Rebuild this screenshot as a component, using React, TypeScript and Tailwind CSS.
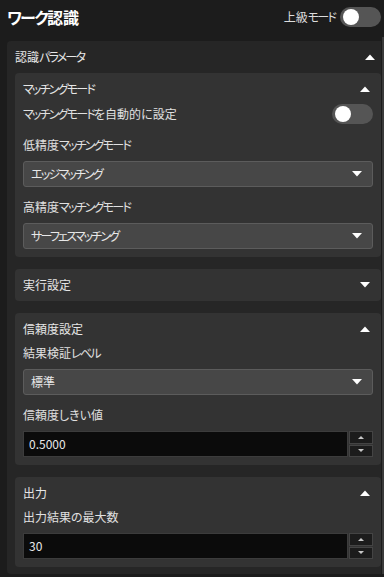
import { useState } from 'react';

const FONT = "font-['Noto_Sans_CJK_JP','Noto_Sans',sans-serif] [font-feature-settings:'palt']";

// katakana runs are set tighter, closer to the narrow UI font in the screenshot
function Jp({ text, loose = false }: { text: string; loose?: boolean }) {
  const parts = text.split(/([\u30A0-\u30FF]+)/);
  return (
    <>
      {parts.map((p, i) =>
        /[\u30A0-\u30FF]/.test(p) ? (
          <span key={i} className={loose ? 'tracking-[-0.1em]' : 'tracking-[-0.15em]'}>
            {p}
          </span>
        ) : (
          <span key={i}>{p}</span>
        ),
      )}
    </>
  );
}

function Caret({ up = false, className = '' }: { up?: boolean; className?: string }) {
  return (
    <svg width="10" height="6" viewBox="0 0 10 6" className={className}>
      <path d={up ? 'M0 6 L5 0.5 L10 6 Z' : 'M0 0 L10 0 L5 5.5 Z'} fill="#ffffff" />
    </svg>
  );
}

function Toggle({ on, onChange }: { on: boolean; onChange: (v: boolean) => void }) {
  return (
    <button
      type="button"
      onClick={() => onChange(!on)}
      className={`flex h-[20px] w-[41px] items-center rounded-full px-[3px] ${on ? 'bg-[#2f7fd8]' : 'bg-[#555555]'}`}
    >
      <span className={`h-[16px] w-[16px] rounded-full bg-white ${on ? 'ml-auto' : ''}`} />
    </button>
  );
}

function Select({ value }: { value: string }) {
  return (
    <div className="mt-[7px] flex h-[26px] items-center justify-between rounded-[3px] border border-[#5c5c5c] bg-[#474747] pl-[7px] pr-[10px] text-[12px] text-[#e8e8e8]">
      <span>
        <Jp text={value} />
      </span>
      <Caret />
    </div>
  );
}

function NumberField({ value }: { value: string }) {
  return (
    <div className="mt-[7px] flex h-[26px]">
      <div className="flex flex-1 items-center border border-[#3c3c3c] bg-[#0b0b0b] pl-[5px] text-[12px] text-[#e8e8e8]">
        {value}
      </div>
      <div className="ml-px flex w-[24px] flex-col gap-px">
        <div className="flex flex-1 items-center justify-center border border-[#444444] bg-[#1c1c1c]">
          <svg width="6" height="3" viewBox="0 0 6 3">
            <path d="M0 3 L3 0 L6 3 Z" fill="#c8c8c8" />
          </svg>
        </div>
        <div className="flex flex-1 items-center justify-center border border-[#444444] bg-[#1c1c1c]">
          <svg width="6" height="3" viewBox="0 0 6 3">
            <path d="M0 0 L6 0 L3 3 Z" fill="#c8c8c8" />
          </svg>
        </div>
      </div>
    </div>
  );
}

function Label({ text, className = '' }: { text: string; className?: string }) {
  return (
    <div className={`flex h-[18px] items-center text-[12px] text-[#e0e0e0] ${className}`}>
      <span>
        <Jp text={text} />
      </span>
    </div>
  );
}

function Card({
  title,
  open,
  children,
}: {
  title: string;
  open: boolean;
  children?: React.ReactNode;
}) {
  return (
    <section className={`rounded-[4px] bg-[#333333] pt-px ${open ? 'pb-[8px]' : 'pb-px'}`}>
      <header className="flex h-[30px] items-center justify-between pl-[8px] pr-[11px] text-[12px] text-[#e6e6e6]">
        <span>
          <Jp text={title} />
        </span>
        <Caret up={open} />
      </header>
      {open && <div className="px-[8px]">{children}</div>}
    </section>
  );
}

export default function App() {
  const [advanced, setAdvanced] = useState(false);
  const [autoMode, setAutoMode] = useState(false);

  return (
    <div className={`h-[577px] w-[384px] overflow-hidden bg-[#1c1c1c] ${FONT}`}>
      <div className="flex h-[33px] items-center justify-between pl-[7px] pr-[3px]">
        <h1 className="text-[16px] font-bold text-white">
          <Jp text="ワーク認識" loose />
        </h1>
        <div className="flex items-center gap-[5px]">
          <span className="text-[12px] text-[#dcdcdc]">
            <Jp text="上級モード" />
          </span>
          <Toggle on={advanced} onChange={setAdvanced} />
        </div>
      </div>

      <div className="mt-[8px] ml-[7px] flex">
        <div className="flex-1 rounded-tl-[4px] rounded-bl-[4px] bg-[#262626] pb-[7px]">
          <div className="flex h-[32px] items-center justify-between pl-[8px] pr-[6px] text-[12px] text-[#e6e6e6]">
            <span>
              <Jp text="認識パラメータ" />
            </span>
            <Caret up />
          </div>

          <div className="flex flex-col gap-[12px] pl-[8px]">
            <Card title="マッチングモード" open>
              <div className="flex h-[20px] items-center justify-between">
                <span className="text-[12px] text-[#e0e0e0]">
                  <Jp text="マッチングモードを自動的に設定" />
                </span>
                <Toggle on={autoMode} onChange={setAutoMode} />
              </div>
              <Label className="mt-[12px]" text="低精度マッチングモード" />
              <Select value="エッジマッチング" />
              <Label className="mt-[11px]" text="高精度マッチングモード" />
              <Select value="サーフェスマッチング" />
            </Card>

            <Card title="実行設定" open={false} />

            <Card title="信頼度設定" open>
              <Label text="結果検証レベル" />
              <Select value="標準" />
              <Label className="mt-[11px]" text="信頼度しきい値" />
              <NumberField value="0.5000" />
            </Card>

            <Card title="出力" open>
              <Label text="出力結果の最大数" />
              <NumberField value="30" />
            </Card>
          </div>
        </div>
        <div className="mt-[-4px] w-[3px] bg-[#1c1c1c]">
          <div className="ml-[1px] h-full w-[2px] bg-[#3a3a3a]" />
        </div>
      </div>
    </div>
  );
}
